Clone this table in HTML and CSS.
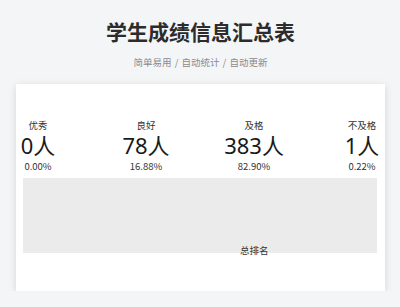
FILE: index.html
```html
<!DOCTYPE html>
<html lang="zh-CN">
<head>
<meta charset="utf-8">
<title>学生成绩信息汇总表</title>
<link rel="stylesheet" href="styles.css">
</head>
<body>
<div class="page">
  <h1 class="title">学生成绩信息汇总表</h1>
  <p class="subtitle">简单易用 / 自动统计 / 自动更新</p>
  <section class="card">
    <div class="stats">
      <div class="stat">
        <span class="stat-label">优秀</span>
        <span class="stat-value">0人</span>
        <span class="stat-pct">0.00%</span>
      </div>
      <div class="stat">
        <span class="stat-label">良好</span>
        <span class="stat-value">78人</span>
        <span class="stat-pct">16.88%</span>
      </div>
      <div class="stat">
        <span class="stat-label">及格</span>
        <span class="stat-value">383人</span>
        <span class="stat-pct">82.90%</span>
      </div>
      <div class="stat">
        <span class="stat-label">不及格</span>
        <span class="stat-value">1人</span>
        <span class="stat-pct">0.22%</span>
      </div>
    </div>
    <div class="chart">
      <span class="axis-label">总排名</span>
    </div>
  </section>
</div>
</body>
</html>
```

FILE: styles.css
```css
html, body {
  margin: 0;
  padding: 0;
}

body {
  background: #f4f5f7;
  font-family: "Noto Sans CJK SC", "Noto Sans", sans-serif;
  color: #333;
}

.page {
  padding: 16px 15px 0 16px;
}

.title {
  margin: 0;
  font-size: 21px;
  line-height: 30px;
  font-weight: 700;
  color: #2c2c2c;
  text-align: center;
}

.subtitle {
  margin: 9px 0 15px;
  font-size: 9.5px;
  line-height: 14px;
  color: #8a8a8a;
  text-align: center;
  word-spacing: 1px;
}

.card {
  height: 207px;
  box-sizing: border-box;
  padding: 35px 8px 0 7px;
  background: #fff;
  box-shadow: 0 2px 8px rgba(0, 0, 0, 0.13);
}

.stats {
  display: flex;
  justify-content: space-between;
}

.stat {
  width: 30px;
  display: flex;
  flex-direction: column;
  align-items: center;
  white-space: nowrap;
}

.stat-label {
  font-size: 9.5px;
  line-height: 13px;
  color: #333;
}

.stat-value {
  font-family: "Noto Sans", "Noto Sans CJK SC", sans-serif;
  font-size: 22px;
  line-height: 27px;
  color: #1a1a1a;
}

.stat-pct {
  font-size: 9.5px;
  line-height: 14px;
  color: #333;
}

.chart {
  position: relative;
  margin-top: 5px;
  height: 75px;
  background: #ebebeb;
}

.axis-label {
  position: absolute;
  left: 65.3%;
  bottom: -3px;
  transform: translateX(-50%);
  font-size: 9.5px;
  line-height: 12px;
  color: #333;
  white-space: nowrap;
}
```
